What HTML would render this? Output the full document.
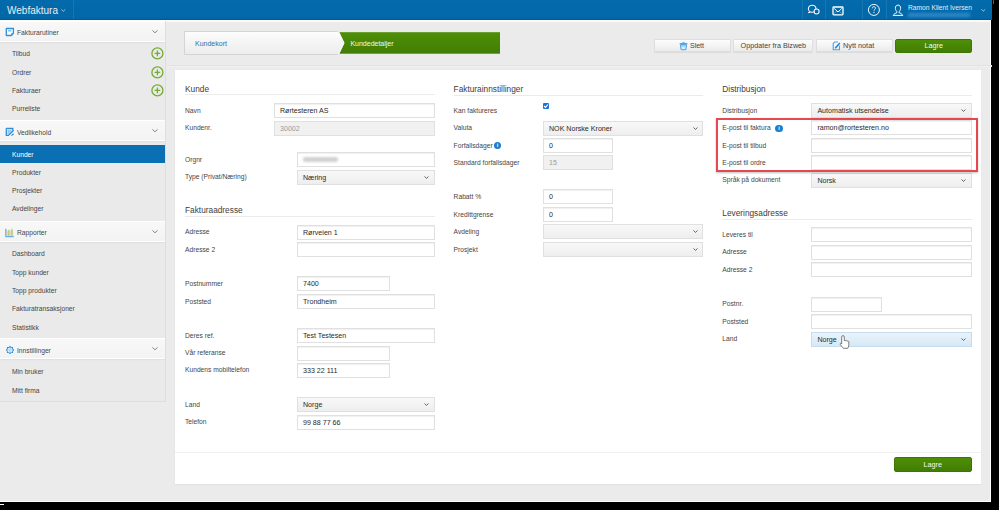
<!DOCTYPE html><html><head><meta charset="utf-8"><style>
*{box-sizing:border-box;margin:0;padding:0}
html,body{width:999px;height:510px;overflow:hidden;background:#000;font-family:"Liberation Sans",sans-serif;}
.a{position:absolute}
#page{position:absolute;left:0;top:0;width:991px;height:502px;background:#ebebeb;border-right:1px solid #fff;border-bottom:1px solid #fff}
.sep{position:absolute;top:0;width:1px;height:19px;background:#1876b3}
.gh{position:absolute;left:0;width:165px;height:21px;background:linear-gradient(#f8f8f8,#f3f3f3);border-top:1px solid #fff;border-bottom:1px solid #fff;box-shadow:0 1px 1px #e0e0e0}
.t{position:absolute;font-size:6.7px;color:#454545;line-height:10px;white-space:nowrap}
.chev{position:absolute;width:4px;height:4px;border-right:1px solid #888;border-bottom:1px solid #888;transform:rotate(45deg)}
.plus{position:absolute;width:12px;height:12px;border:1.4px solid #72ad32;border-radius:50%}
.plus:before{content:"";position:absolute;left:2.3px;top:4.1px;width:4.6px;height:1.4px;background:#72ad32}
.plus:after{content:"";position:absolute;left:4.1px;top:2.3px;width:1.4px;height:4.6px;background:#72ad32}
#panel{position:absolute;left:175px;top:70px;width:806px;height:414px;background:#fff;box-shadow:0 1px 1px #e2e2e2,-1px 0 1px #e8e8e8}
.h{position:absolute;font-size:8.3px;color:#3d3d3d;line-height:10px;white-space:nowrap}
.hl{position:absolute;height:1px;background:#ebebeb}
.in{position:absolute;border:1px solid #e0e0e0;background:#fff;font-size:7.1px;color:#2a2a2a;padding-left:5px;white-space:nowrap;box-shadow:inset 0 1px 1px #f0f0f0}
.dis{background:#f1f1f1;color:#9a9a9a}
.sel{position:absolute;border:1px solid #e0e0e0;background:linear-gradient(#f8f8f8,#eeeeee);font-size:7.1px;color:#2a2a2a;padding-left:5px;white-space:nowrap}
.sel .chev{width:3px;height:3px;border-color:#555}
.btn{position:absolute;border:1px solid #dedede;border-radius:1px;background:linear-gradient(#fdfdfd,#ebebeb);font-size:7px;color:#444;text-align:center;white-space:nowrap;box-shadow:0 1px 0 #dcdcdc}
.green{background:linear-gradient(#4f8f07,#417d04);border:1px solid #3c7605;color:#eef6e0;border-radius:2px;box-shadow:none}
.hov{background:linear-gradient(#e9f4fc,#d6e8f6);border-color:#c4ddef}
.info{position:absolute;width:7.6px;height:7.6px;border-radius:50%;background:#1a7fd0;color:#fff;font-size:5.5px;line-height:7.6px;text-align:center;font-weight:bold}
</style></head><body><div id="page">
<div class="a" style="left:0;top:0;width:991.5px;height:20px;background:linear-gradient(#036aab 0,#0268a8 90%,#00579a 100%)"></div>
<div class="a" style="left:0;top:20px;width:991px;height:1.5px;background:#fcf8f4"></div>
<div class="a" style="left:993px;top:0;width:1px;height:4px;background:#0a6cc0"></div>
<div class="t" style="left:7px;top:5.50px;font-size:10px;line-height:10px;color:#e6f0f8;">Webfaktura</div>
<svg class="a" style="left:61.3px;top:9.2px;overflow:visible" width="4.7" height="2.7" viewBox="0 0 4.7 2.7"><path d="M0.4 0.4 L2.35 2.3000000000000003 L4.3 0.4" fill="none" stroke="#a9cbe6" stroke-width="0.9"/></svg>
<div class="sep" style="left:73px"></div>
<div class="sep" style="left:802px"></div>
<div class="sep" style="left:825px"></div>
<div class="sep" style="left:862px"></div>
<div class="sep" style="left:886px"></div>
<div class="t" style="left:908px;top:2.70px;font-size:6.7px;line-height:10px;color:#e2edf6;">Ramon Klient Iversen</div>
<div class="a" style="left:908px;top:12.5px;width:62px;height:4px;background:#3a90cf;filter:blur(1.4px);opacity:.8"></div>
<svg class="a" style="left:980.5px;top:8.5px;overflow:visible" width="4.5" height="2.5" viewBox="0 0 4.5 2.5"><path d="M0.4 0.4 L2.25 2.1 L4.1 0.4" fill="none" stroke="#a9cbe6" stroke-width="0.9"/></svg>
<div class="a" style="left:0;top:21px;width:166px;height:381px;background:#eaeaea;border-right:1px solid #dedede;border-bottom:1px solid #dedede"></div>
<div class="gh" style="top:21px"></div>
<div class="t" style="left:17px;top:28.00px;font-size:6.7px;line-height:10px;">Fakturarutiner</div>
<svg class="a" style="left:152.2px;top:29.7px;overflow:visible" width="6" height="3.2" viewBox="0 0 6 3.2"><path d="M0.4 0.4 L3.0 2.8000000000000003 L5.6 0.4" fill="none" stroke="#7a7a7a" stroke-width="0.9"/></svg>
<div class="gh" style="top:120px"></div>
<div class="t" style="left:17px;top:127.50px;font-size:6.7px;line-height:10px;">Vedlikehold</div>
<svg class="a" style="left:152.2px;top:129.2px;overflow:visible" width="6" height="3.2" viewBox="0 0 6 3.2"><path d="M0.4 0.4 L3.0 2.8000000000000003 L5.6 0.4" fill="none" stroke="#7a7a7a" stroke-width="0.9"/></svg>
<div class="gh" style="top:220.5px"></div>
<div class="t" style="left:17px;top:228.00px;font-size:6.7px;line-height:10px;">Rapporter</div>
<svg class="a" style="left:152.2px;top:229.7px;overflow:visible" width="6" height="3.2" viewBox="0 0 6 3.2"><path d="M0.4 0.4 L3.0 2.8000000000000003 L5.6 0.4" fill="none" stroke="#7a7a7a" stroke-width="0.9"/></svg>
<div class="gh" style="top:338px"></div>
<div class="t" style="left:17px;top:345.70px;font-size:6.7px;line-height:10px;">Innstillinger</div>
<svg class="a" style="left:152.2px;top:347.4px;overflow:visible" width="6" height="3.2" viewBox="0 0 6 3.2"><path d="M0.4 0.4 L3.0 2.8000000000000003 L5.6 0.4" fill="none" stroke="#7a7a7a" stroke-width="0.9"/></svg>
<div class="a" style="left:0;top:144.5px;width:165px;height:18px;background:#0b6fb4"></div>
<div class="t" style="left:12px;top:49.10px;font-size:6.7px;line-height:10px;">Tilbud</div>
<div class="t" style="left:12px;top:67.50px;font-size:6.7px;line-height:10px;">Ordrer</div>
<div class="t" style="left:12px;top:85.90px;font-size:6.7px;line-height:10px;">Fakturaer</div>
<div class="t" style="left:12px;top:104.10px;font-size:6.7px;line-height:10px;">Purreliste</div>
<div class="t" style="left:12px;top:149.50px;font-size:6.7px;line-height:10px;color:#fff;">Kunder</div>
<div class="t" style="left:12px;top:167.70px;font-size:6.7px;line-height:10px;">Produkter</div>
<div class="t" style="left:12px;top:186.10px;font-size:6.7px;line-height:10px;">Prosjekter</div>
<div class="t" style="left:12px;top:204.30px;font-size:6.7px;line-height:10px;">Avdelinger</div>
<div class="t" style="left:12px;top:248.90px;font-size:6.7px;line-height:10px;">Dashboard</div>
<div class="t" style="left:12px;top:267.50px;font-size:6.7px;line-height:10px;">Topp kunder</div>
<div class="t" style="left:12px;top:285.90px;font-size:6.7px;line-height:10px;">Topp produkter</div>
<div class="t" style="left:12px;top:304.10px;font-size:6.7px;line-height:10px;">Fakturatransaksjoner</div>
<div class="t" style="left:12px;top:322.50px;font-size:6.7px;line-height:10px;">Statistikk</div>
<div class="t" style="left:12px;top:366.90px;font-size:6.7px;line-height:10px;">Min bruker</div>
<div class="t" style="left:12px;top:385.50px;font-size:6.7px;line-height:10px;">Mitt firma</div>
<svg class="a" style="left:151px;top:47.2px" width="13" height="13" viewBox="0 0 13 13"><circle cx="6.4" cy="6.4" r="5.5" fill="none" stroke="#72ad32" stroke-width="1.3"/><path d="M3.6 6.4 H9.2 M6.4 3.6 V9.2" stroke="#72ad32" stroke-width="1.3"/></svg>
<svg class="a" style="left:151px;top:65.6px" width="13" height="13" viewBox="0 0 13 13"><circle cx="6.4" cy="6.4" r="5.5" fill="none" stroke="#72ad32" stroke-width="1.3"/><path d="M3.6 6.4 H9.2 M6.4 3.6 V9.2" stroke="#72ad32" stroke-width="1.3"/></svg>
<svg class="a" style="left:151px;top:84.0px" width="13" height="13" viewBox="0 0 13 13"><circle cx="6.4" cy="6.4" r="5.5" fill="none" stroke="#72ad32" stroke-width="1.3"/><path d="M3.6 6.4 H9.2 M6.4 3.6 V9.2" stroke="#72ad32" stroke-width="1.3"/></svg>
<div class="a" style="left:168px;top:65px;width:824px;height:1px;background:#e2e2e2"></div>
<div class="a" style="left:168px;top:66px;width:824px;height:1px;background:#f0f0f0"></div>
<svg class="a" style="left:183px;top:30px" width="320" height="26" viewBox="0 0 320 26"><defs><linearGradient id="lg" x1="0" y1="0" x2="0" y2="1"><stop offset="0" stop-color="#fdfdfd"/><stop offset="1" stop-color="#ececec"/></linearGradient><linearGradient id="gg" x1="0" y1="0" x2="0" y2="1"><stop offset="0" stop-color="#4f8f07"/><stop offset="1" stop-color="#417d04"/></linearGradient></defs><rect x="154" y="2.2" width="163" height="21.5" fill="url(#gg)"/><path d="M1.5 1.5 H155.5 L161 13 L155.5 24.5 H1.5 Z" fill="url(#lg)" stroke="#d4d4d4" stroke-width="1"/><path d="M155.3 1.5 L160.8 13 L155.3 24.5" fill="none" stroke="#fafafa" stroke-width="1.1"/></svg>
<div class="t" style="left:195px;top:38.50px;font-size:7px;line-height:10px;color:#2f70ad;">Kundekort</div>
<div class="t" style="left:350.4px;top:38.50px;font-size:7px;line-height:10px;color:#f4f9ee;">Kundedetaljer</div>
<div class="btn" style="left:653.5px;top:38.6px;width:77px;height:13.8px"></div>
<div class="btn" style="left:733px;top:38.6px;width:79.8px;height:13.8px"></div>
<div class="btn" style="left:815.5px;top:38.6px;width:77px;height:13.8px"></div>
<div class="btn green" style="left:894.8px;top:38.5px;width:77.6px;height:14px"></div>
<div class="t" style="left:690px;top:41.00px;font-size:7px;line-height:10px;">Slett</div>
<div class="t" style="left:740.6px;top:41.00px;font-size:7.2px;line-height:10px;">Oppdater fra Bizweb</div>
<div class="t" style="left:843px;top:41.00px;font-size:7.3px;line-height:10px;">Nytt notat</div>
<div class="t" style="left:924.5px;top:41.00px;font-size:7.2px;line-height:10px;color:#f4f9ee;">Lagre</div>
<div id="panel"></div>
<div class="a" style="left:175px;top:451.5px;width:806px;height:1px;background:#f0f0f0"></div>
<div class="btn green" style="left:894px;top:457px;width:77.5px;height:14.7px"></div>
<div class="t" style="left:923.6px;top:459.90px;font-size:7.2px;line-height:10px;color:#f4f9ee;">Lagre</div>
<div class="h" style="left:185px;top:83.5px">Kunde</div>
<div class="hl" style="left:185px;top:94px;width:249.5px"></div>
<div class="h" style="left:185px;top:205px">Fakturaadresse</div>
<div class="hl" style="left:185px;top:216px;width:249.5px"></div>
<div class="h" style="left:453.6px;top:83.5px">Fakturainnstillinger</div>
<div class="hl" style="left:453.6px;top:94.5px;width:249.10000000000002px"></div>
<div class="h" style="left:722.3px;top:83.6px">Distribusjon</div>
<div class="hl" style="left:722.3px;top:94.5px;width:249.30000000000007px"></div>
<div class="h" style="left:722.3px;top:208px">Leveringsadresse</div>
<div class="hl" style="left:722.3px;top:219px;width:249.30000000000007px"></div>
<div class="t" style="left:185px;top:105.50px;font-size:6.7px;line-height:10px;">Navn</div>
<div class="in" style="left:274px;top:103px;width:160.5px;height:15px;line-height:13px;padding-top:0.5px;">Rørtesteren AS</div>
<div class="t" style="left:185px;top:122.90px;font-size:6.7px;line-height:10px;">Kundenr.</div>
<div class="in dis" style="left:274px;top:121px;width:160.5px;height:15px;line-height:13px;padding-top:0.5px;">30002</div>
<div class="t" style="left:185px;top:154.90px;font-size:6.7px;line-height:10px;">Orgnr</div>
<div class="in" style="left:297px;top:152px;width:137.5px;height:15px;line-height:13px;padding-top:0.5px;"></div>
<div class="t" style="left:185px;top:172.10px;font-size:6.7px;line-height:10px;">Type (Privat/Næring)</div>
<div class="sel" style="left:297px;top:170px;width:137.5px;height:15px;line-height:13px;padding-top:0.5px;">Næring<svg class="a" style="right:4.2px;top:5.2px" width="5" height="3" viewBox="0 0 5 3"><path d="M0.5 0.5 L2.5 2.4 L4.5 0.5" fill="none" stroke="#555" stroke-width="0.9"/></svg></div>
<div class="t" style="left:185px;top:227.10px;font-size:6.7px;line-height:10px;">Adresse</div>
<div class="in" style="left:297px;top:225px;width:137.5px;height:15px;line-height:13px;padding-top:0.5px;">Rørveien 1</div>
<div class="t" style="left:185px;top:244.50px;font-size:6.7px;line-height:10px;">Adresse 2</div>
<div class="in" style="left:297px;top:242px;width:137.5px;height:15px;line-height:13px;padding-top:0.5px;"></div>
<div class="t" style="left:185px;top:278.50px;font-size:6.7px;line-height:10px;">Postnummer</div>
<div class="in" style="left:297px;top:276px;width:92.5px;height:15px;line-height:13px;padding-top:0.5px;">7400</div>
<div class="t" style="left:185px;top:296.50px;font-size:6.7px;line-height:10px;">Poststed</div>
<div class="in" style="left:297px;top:294px;width:137.5px;height:15px;line-height:13px;padding-top:0.5px;">Trondheim</div>
<div class="t" style="left:185px;top:330.50px;font-size:6.7px;line-height:10px;">Deres ref.</div>
<div class="in" style="left:297px;top:328px;width:137.5px;height:15px;line-height:13px;padding-top:0.5px;">Test Testesen</div>
<div class="t" style="left:185px;top:347.50px;font-size:6.7px;line-height:10px;">Vår referanse</div>
<div class="in" style="left:297px;top:346px;width:92.5px;height:15px;line-height:13px;padding-top:0.5px;"></div>
<div class="t" style="left:185px;top:364.90px;font-size:6.7px;line-height:10px;">Kundens mobiltelefon</div>
<div class="in" style="left:297px;top:363px;width:92.5px;height:15px;line-height:13px;padding-top:0.5px;">333 22 111</div>
<div class="t" style="left:185px;top:399.50px;font-size:6.7px;line-height:10px;">Land</div>
<div class="sel" style="left:297px;top:397px;width:137.5px;height:15px;line-height:13px;padding-top:0.5px;">Norge<svg class="a" style="right:4.2px;top:5.2px" width="5" height="3" viewBox="0 0 5 3"><path d="M0.5 0.5 L2.5 2.4 L4.5 0.5" fill="none" stroke="#555" stroke-width="0.9"/></svg></div>
<div class="t" style="left:185px;top:416.50px;font-size:6.7px;line-height:10px;">Telefon</div>
<div class="in" style="left:297px;top:415px;width:137.5px;height:15px;line-height:13px;padding-top:0.5px;">99 88 77 66</div>
<div class="t" style="left:453.6px;top:105.50px;font-size:6.7px;line-height:10px;">Kan faktureres</div>
<div class="t" style="left:453.6px;top:122.90px;font-size:6.7px;line-height:10px;">Valuta</div>
<div class="sel" style="left:543px;top:121px;width:159.70000000000005px;height:15px;line-height:13px;padding-top:0.5px;">NOK Norske Kroner<svg class="a" style="right:4.2px;top:5.2px" width="5" height="3" viewBox="0 0 5 3"><path d="M0.5 0.5 L2.5 2.4 L4.5 0.5" fill="none" stroke="#555" stroke-width="0.9"/></svg></div>
<div class="t" style="left:453.6px;top:140.50px;font-size:6.7px;line-height:10px;">Forfallsdager</div>
<div class="in" style="left:543px;top:138px;width:70.20000000000005px;height:15px;line-height:13px;padding-top:0.5px;">0</div>
<div class="t" style="left:453.6px;top:157.50px;font-size:6.7px;line-height:10px;">Standard forfallsdager</div>
<div class="in dis" style="left:543px;top:155px;width:70.20000000000005px;height:15px;line-height:13px;padding-top:0.5px;">15</div>
<div class="t" style="left:453.6px;top:192.00px;font-size:6.7px;line-height:10px;">Rabatt %</div>
<div class="in" style="left:543px;top:189px;width:70.20000000000005px;height:15px;line-height:13px;padding-top:0.5px;">0</div>
<div class="t" style="left:453.6px;top:209.50px;font-size:6.7px;line-height:10px;">Kredittgrense</div>
<div class="in" style="left:543px;top:207px;width:70.20000000000005px;height:15px;line-height:13px;padding-top:0.5px;">0</div>
<div class="t" style="left:453.6px;top:227.10px;font-size:6.7px;line-height:10px;">Avdeling</div>
<div class="sel" style="left:543px;top:224px;width:159.70000000000005px;height:15px;line-height:13px;padding-top:0.5px;"><svg class="a" style="right:4.2px;top:5.2px" width="5" height="3" viewBox="0 0 5 3"><path d="M0.5 0.5 L2.5 2.4 L4.5 0.5" fill="none" stroke="#555" stroke-width="0.9"/></svg></div>
<div class="t" style="left:453.6px;top:244.50px;font-size:6.7px;line-height:10px;">Prosjekt</div>
<div class="sel" style="left:543px;top:242px;width:159.70000000000005px;height:15px;line-height:13px;padding-top:0.5px;"><svg class="a" style="right:4.2px;top:5.2px" width="5" height="3" viewBox="0 0 5 3"><path d="M0.5 0.5 L2.5 2.4 L4.5 0.5" fill="none" stroke="#555" stroke-width="0.9"/></svg></div>
<div class="t" style="left:722.3px;top:105.50px;font-size:6.7px;line-height:10px;">Distribusjon</div>
<div class="sel" style="left:811.4px;top:103px;width:160.20000000000005px;height:15px;line-height:13px;padding-top:0.5px;">Automatisk utsendelse<svg class="a" style="right:4.2px;top:5.2px" width="5" height="3" viewBox="0 0 5 3"><path d="M0.5 0.5 L2.5 2.4 L4.5 0.5" fill="none" stroke="#555" stroke-width="0.9"/></svg></div>
<div class="t" style="left:722.3px;top:123.10px;font-size:6.7px;line-height:10px;">E-post til faktura</div>
<div class="in" style="left:811.4px;top:120px;width:160.20000000000005px;height:15px;line-height:13px;padding-top:0.5px;">ramon@rortesteren.no</div>
<div class="t" style="left:722.3px;top:140.50px;font-size:6.7px;line-height:10px;">E-post til tilbud</div>
<div class="in" style="left:811.4px;top:138px;width:160.20000000000005px;height:15px;line-height:13px;padding-top:0.5px;"></div>
<div class="t" style="left:722.3px;top:157.50px;font-size:6.7px;line-height:10px;">E-post til ordre</div>
<div class="in" style="left:811.4px;top:155px;width:160.20000000000005px;height:15px;line-height:13px;padding-top:0.5px;"></div>
<div class="t" style="left:722.3px;top:175.10px;font-size:6.7px;line-height:10px;">Språk på dokument</div>
<div class="sel" style="left:811.4px;top:173px;width:160.20000000000005px;height:15px;line-height:13px;padding-top:0.5px;">Norsk<svg class="a" style="right:4.2px;top:5.2px" width="5" height="3" viewBox="0 0 5 3"><path d="M0.5 0.5 L2.5 2.4 L4.5 0.5" fill="none" stroke="#555" stroke-width="0.9"/></svg></div>
<div class="t" style="left:722.3px;top:229.90px;font-size:6.7px;line-height:10px;">Leveres til</div>
<div class="in" style="left:811.4px;top:227px;width:160.20000000000005px;height:15px;line-height:13px;padding-top:0.5px;"></div>
<div class="t" style="left:722.3px;top:247.10px;font-size:6.7px;line-height:10px;">Adresse</div>
<div class="in" style="left:811.4px;top:245px;width:160.20000000000005px;height:15px;line-height:13px;padding-top:0.5px;"></div>
<div class="t" style="left:722.3px;top:264.50px;font-size:6.7px;line-height:10px;">Adresse 2</div>
<div class="in" style="left:811.4px;top:262px;width:160.20000000000005px;height:15px;line-height:13px;padding-top:0.5px;"></div>
<div class="t" style="left:722.3px;top:298.90px;font-size:6.7px;line-height:10px;">Postnr.</div>
<div class="in" style="left:811.4px;top:297px;width:70.20000000000005px;height:15px;line-height:13px;padding-top:0.5px;"></div>
<div class="t" style="left:722.3px;top:316.50px;font-size:6.7px;line-height:10px;">Poststed</div>
<div class="in" style="left:811.4px;top:314px;width:160.20000000000005px;height:15px;line-height:13px;padding-top:0.5px;"></div>
<div class="t" style="left:722.3px;top:333.70px;font-size:6.7px;line-height:10px;">Land</div>
<div class="sel hov" style="left:811.4px;top:332px;width:160.20000000000005px;height:15px;line-height:13px;padding-top:0.5px;">Norge<svg class="a" style="right:4.2px;top:5.2px" width="5" height="3" viewBox="0 0 5 3"><path d="M0.5 0.5 L2.5 2.4 L4.5 0.5" fill="none" stroke="#555" stroke-width="0.9"/></svg></div>
<div class="a" style="left:303px;top:156.8px;width:35px;height:5.5px;background:#d2d2d2;filter:blur(1.3px);border-radius:2px"></div>
<div class="a" style="left:543px;top:103.3px;width:6px;height:6px;background:#1a73e0;border-radius:1px"></div>
<svg class="a" style="left:543px;top:103.3px" width="6" height="6" viewBox="0 0 6 6"><path d="M1.1 3 L2.5 4.4 L4.9 1.5" fill="none" stroke="#fff" stroke-width="1.1"/></svg>
<div class="info" style="left:493.6px;top:141.8px">i</div>
<div class="info" style="left:775.2px;top:124.6px">i</div>
<div class="a" style="left:715.5px;top:118px;width:262.5px;height:54px;border:2px solid #e5484e;box-shadow:0 1px 2px rgba(0,0,0,.25)"></div>
<svg class="a" style="left:5px;top:27px;overflow:visible" width="10" height="10" viewBox="0 0 10 10"><path d="M1.3 1.5 H8.4 V6.3 L6.3 8.5 H1.3 Z" fill="#fff" stroke="#2b8fde" stroke-width="1.3" stroke-linejoin="round"/><path d="M8.4 6.3 H6.3 V8.5 Z" fill="#2b8fde"/><rect x="3.1" y="3.2" width="3.2" height="1.2" fill="#2b8fde" opacity=".75"/></svg>
<svg class="a" style="left:5px;top:127px;overflow:visible" width="10" height="10" viewBox="0 0 10 10"><path d="M1.3 1.3 H7.8 V3.5 M1.3 1.3 V8.3 H4" fill="none" stroke="#2b8fde" stroke-width="1.3"/><path d="M2.5 2.5 H7.4 L3 7.6 H2.5 Z" fill="#2b8fde" opacity=".45"/><path d="M3.8 8 L8.6 3.2" stroke="#2b8fde" stroke-width="1.4"/><path d="M6.5 8.6 L8.6 6.8" stroke="#2b8fde" stroke-width="1.2"/></svg>
<svg class="a" style="left:5px;top:228px;overflow:visible" width="10" height="10" viewBox="0 0 10 10"><rect x="1.3" y="2.5" width="7" height="5.5" fill="#fbd3a3" opacity=".9"/><rect x="3.2" y="1.8" width="1.2" height="6" fill="#9ed07e"/><rect x="6.3" y="0.7" width="1.2" height="7.3" fill="#9ed07e"/><path d="M0.8 0.7 V8.7 H8.8" fill="none" stroke="#66b2ec" stroke-width="1.3"/></svg>
<svg class="a" style="left:4.7px;top:344.8px;overflow:visible" width="10" height="10" viewBox="0 0 10 10"><polygon points="9.30,5.00 8.05,6.26 8.04,8.04 6.26,8.05 5.00,9.30 3.74,8.05 1.96,8.04 1.95,6.26 0.70,5.00 1.95,3.74 1.96,1.96 3.74,1.95 5.00,0.70 6.26,1.95 8.04,1.96 8.05,3.74" fill="#2b8fde"/><circle cx="5" cy="5" r="2.6" fill="#e3f0fb"/><circle cx="5" cy="5" r="1.3" fill="none" stroke="#2b8fde" stroke-width=".5" opacity=".6"/></svg>
<svg class="a" style="left:804px;top:2px;overflow:visible" width="20" height="16" viewBox="0 0 20 16"><ellipse cx="8.2" cy="6.7" rx="3.8" ry="3.5" fill="none" stroke="#f4f9fd" stroke-width="1.1"/><path d="M5.6 9.3 L4.3 10.7 L6.5 10.3" fill="#0268a8" stroke="#f4f9fd" stroke-width="1"/><circle cx="12.6" cy="9.5" r="2.5" fill="#0268a8" stroke="#f4f9fd" stroke-width="1.1"/></svg>
<svg class="a" style="left:831.5px;top:5.5px;overflow:visible" width="12" height="10" viewBox="0 0 12 10"><rect x="1" y="1" width="10" height="7.8" rx="0.8" fill="none" stroke="#fff" stroke-width="1.3"/><path d="M2.2 2.4 L6 6 L9.8 2.4" fill="none" stroke="#fff" stroke-width="1"/><path d="M2.3 7.6 L4.5 5.2 M9.7 7.6 L7.5 5.2" fill="none" stroke="#f4f9fd" stroke-width=".6" opacity=".6"/></svg>
<svg class="a" style="left:867px;top:3px;overflow:visible" width="14" height="14" viewBox="0 0 14 14"><circle cx="6.9" cy="6.9" r="5.5" fill="none" stroke="#f4f9fd" stroke-width="1"/><path d="M5.3 5.3 C5.3 4.2 6 3.7 6.9 3.7 C7.8 3.7 8.5 4.3 8.5 5.1 C8.5 6.2 7 6.3 7 7.6" fill="none" stroke="#f4f9fd" stroke-width="1"/><circle cx="7" cy="9.4" r="0.6" fill="#f4f9fd"/></svg>
<svg class="a" style="left:892px;top:3.5px;overflow:visible" width="12" height="13" viewBox="0 0 12 13"><path d="M6 1.1 C7.8 1.1 8.8 2.5 8.6 4.4 C8.5 6 7.8 7.2 7 7.6 V8.6 C8.5 9.2 10.3 10 10.8 11.4 H1.2 C1.7 10 3.5 9.2 5 8.6 V7.6 C4.2 7.2 3.5 6 3.4 4.4 C3.2 2.5 4.2 1.1 6 1.1 Z" fill="none" stroke="#f4f9fd" stroke-width="1"/></svg>
<svg class="a" style="left:679px;top:40.5px;overflow:visible" width="9" height="10" viewBox="0 0 9 10"><path d="M0.6 2.6 H8.4" stroke="#4aa2e8" stroke-width="1.1"/><path d="M3.2 2.3 C3.2 1 5.8 1 5.8 2.3" fill="none" stroke="#4aa2e8" stroke-width="0.9"/><path d="M1.4 3.6 L2.1 8.7 H6.9 L7.6 3.6 Z" fill="#cfe6f8" stroke="#4aa2e8" stroke-width="1"/><path d="M2.4 4.8 H6.6" stroke="#4aa2e8" stroke-width=".8" opacity=".7"/><path d="M3.4 7.1 H5.6" stroke="#fff" stroke-width=".8"/></svg>
<svg class="a" style="left:831.5px;top:40.5px;overflow:visible" width="9" height="10" viewBox="0 0 9 10"><path d="M7.5 4.5 V8.8 H1.2 V2.4 L2.6 1 H6" fill="none" stroke="#4aa2e8" stroke-width="1.1"/><path d="M3.2 7.3 L7.8 2" stroke="#1f84dd" stroke-width="1.5"/></svg>
<svg class="a" style="left:838.5px;top:335.3px" width="11" height="14" viewBox="0 0 22 28"><path d="M8 1.2 C9.6 1.2 10.6 2.2 10.6 3.8 V11.2 C11.4 10.4 13 10.6 13.6 11.6 C14.4 10.9 16 11.1 16.5 12.2 C17.3 11.7 19.2 12 19.6 13.4 V19.5 C19.6 22.5 18.6 24.6 17.6 26.6 H8.8 C7.4 25 5 22 2.8 19.4 C1.8 18 2.6 16.2 4.3 16.8 L5.4 17.6 V3.8 C5.4 2.2 6.4 1.2 8 1.2 Z" fill="#fff" stroke="#3a3a3a" stroke-width="1.3" stroke-linejoin="round"/></svg>
</div><div class="a" style="left:0;top:504px;width:4px;height:1px;background:#fff"></div></body></html>
